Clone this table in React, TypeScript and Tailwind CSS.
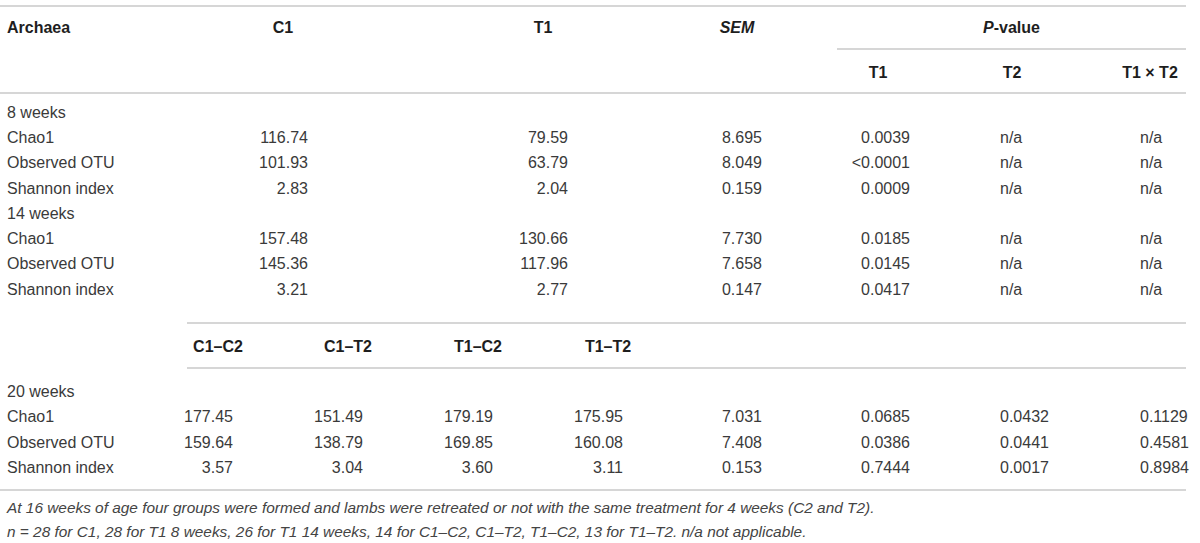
import React from "react";

const FONT = { fontFamily: '"Liberation Sans", Arial, Helvetica, sans-serif' };

type TopRow = { label: string; c1?: string; t1?: string; sem?: string; p1?: string; p2?: string; p3?: string; group?: boolean };

const top: TopRow[] = [
  { label: "8 weeks", group: true },
  { label: "Chao1", c1: "116.74", t1: "79.59", sem: "8.695", p1: "0.0039", p2: "n/a", p3: "n/a" },
  { label: "Observed OTU", c1: "101.93", t1: "63.79", sem: "8.049", p1: "<0.0001", p2: "n/a", p3: "n/a" },
  { label: "Shannon index", c1: "2.83", t1: "2.04", sem: "0.159", p1: "0.0009", p2: "n/a", p3: "n/a" },
  { label: "14 weeks", group: true },
  { label: "Chao1", c1: "157.48", t1: "130.66", sem: "7.730", p1: "0.0185", p2: "n/a", p3: "n/a" },
  { label: "Observed OTU", c1: "145.36", t1: "117.96", sem: "7.658", p1: "0.0145", p2: "n/a", p3: "n/a" },
  { label: "Shannon index", c1: "3.21", t1: "2.77", sem: "0.147", p1: "0.0417", p2: "n/a", p3: "n/a" },
];

type BotRow = { label: string; v?: string[]; sem?: string; p1?: string; p2?: string; p3?: string };

const bottom: BotRow[] = [
  { label: "20 weeks" },
  { label: "Chao1", v: ["177.45", "151.49", "179.19", "175.95"], sem: "7.031", p1: "0.0685", p2: "0.0432", p3: "0.1129" },
  { label: "Observed OTU", v: ["159.64", "138.79", "169.85", "160.08"], sem: "7.408", p1: "0.0386", p2: "0.0441", p3: "0.4581" },
  { label: "Shannon index", v: ["3.57", "3.04", "3.60", "3.11"], sem: "0.153", p1: "0.7444", p2: "0.0017", p3: "0.8984" },
];

function PCells({ p1, p2, p3 }: { p1?: string; p2?: string; p3?: string }) {
  return (
    <>
      <div className="w-[70px] shrink-0" />
      <div className="w-[82px] shrink-0 text-right pr-[9px]">{p1}</div>
      <div className="w-[186px] shrink-0 pl-[81px]">{p2}</div>
      <div className="w-[81px] shrink-0 pl-[35px]">{p3}</div>
    </>
  );
}

export default function App() {
  return (
    <div className="w-[1200px] h-[543px] bg-white text-[16px] text-[#3a3a3a] overflow-hidden" style={FONT}>
      <div className="pt-[5px]">
        <div className="w-[1186px] border-t-2 border-b-2 border-[#d6d6d6] flex">
          <div className="flex font-bold text-[#1e1e1e] h-[85px]">
            <div className="w-[187px] pl-[7px] h-[41px] flex items-center">Archaea</div>
            <div className="w-[192px] h-[41px] flex items-center justify-center">C1</div>
            <div className="w-[328px] h-[41px] flex items-center justify-center">T1</div>
            <div className="w-[60px] h-[41px] flex items-center justify-center italic">SEM</div>
            <div className="w-[70px]" />
          </div>
          <div className="w-[349px] flex flex-col font-bold text-[#1e1e1e]">
            <div className="h-[43px] flex items-center justify-center border-b-2 border-[#d6d6d6]">
              <span><span className="italic">P</span>-value</span>
            </div>
            <div className="h-[42px] pt-[3px] flex items-center">
              <div className="w-[82px] text-center">T1</div>
              <div className="w-[186px] text-center">T2</div>
              <div className="w-[81px] text-center pl-[9px] whitespace-nowrap">T1 × T2</div>
            </div>
          </div>
        </div>

        <div className="pt-[6px] pb-[20px]">
          {top.map((r, i) => (
            <div key={i} className="flex h-[25.3px] items-center whitespace-nowrap">
              <div className="w-[187px] shrink-0 pl-[7px]">{r.label}</div>
              {!r.group && (
                <>
                  <div className="w-[192px] shrink-0 text-right pr-[71px]">{r.c1}</div>
                  <div className="w-[328px] shrink-0 text-right pr-[139px]">{r.t1}</div>
                  <div className="w-[60px] shrink-0 text-right pr-[5px]">{r.sem}</div>
                  <PCells p1={r.p1} p2={r.p2} p3={r.p3} />
                </>
              )}
            </div>
          ))}
        </div>

        <div className="ml-[187px] w-[999px] h-[47px] pt-[3px] border-t-2 border-b-2 border-[#d6d6d6] flex items-center font-bold text-[#1e1e1e] whitespace-nowrap">
          <div className="w-[96px] pr-[34px] text-center">C1–C2</div>
          <div className="w-[130px] text-center">C1–T2</div>
          <div className="w-[130px] text-center">T1–C2</div>
          <div className="w-[130px] text-center">T1–T2</div>
        </div>

        <div className="w-[1186px] pt-[10px] pb-[8px] border-b-2 border-[#d6d6d6]">
          {bottom.map((r, i) => (
            <div key={i} className="flex h-[25.4px] items-center whitespace-nowrap">
              <div className="w-[153px] shrink-0 pl-[7px]">{r.label}</div>
              {r.v && (
                <>
                  {r.v.map((x, j) => (
                    <div key={j} className="w-[130px] shrink-0 text-right pr-[50px]">{x}</div>
                  ))}
                  <div className="w-[94px] shrink-0 text-right pr-[5px]">{r.sem}</div>
                  <PCells p1={r.p1} p2={r.p2} p3={r.p3} />
                </>
              )}
            </div>
          ))}
        </div>

        <div className="pt-[5px] pl-[7px] italic text-[15.4px] text-[#444] whitespace-nowrap">
          <div className="h-[24px] flex items-center">
            At 16 weeks of age four groups were formed and lambs were retreated or not with the same treatment for 4 weeks (C2 and T2).
          </div>
          <div className="h-[24px] flex items-center">
            n = 28 for C1, 28 for T1 8 weeks, 26 for T1 14 weeks, 14 for C1–C2, C1–T2, T1–C2, 13 for T1–T2. n/a not applicable.
          </div>
        </div>
      </div>
    </div>
  );
}
